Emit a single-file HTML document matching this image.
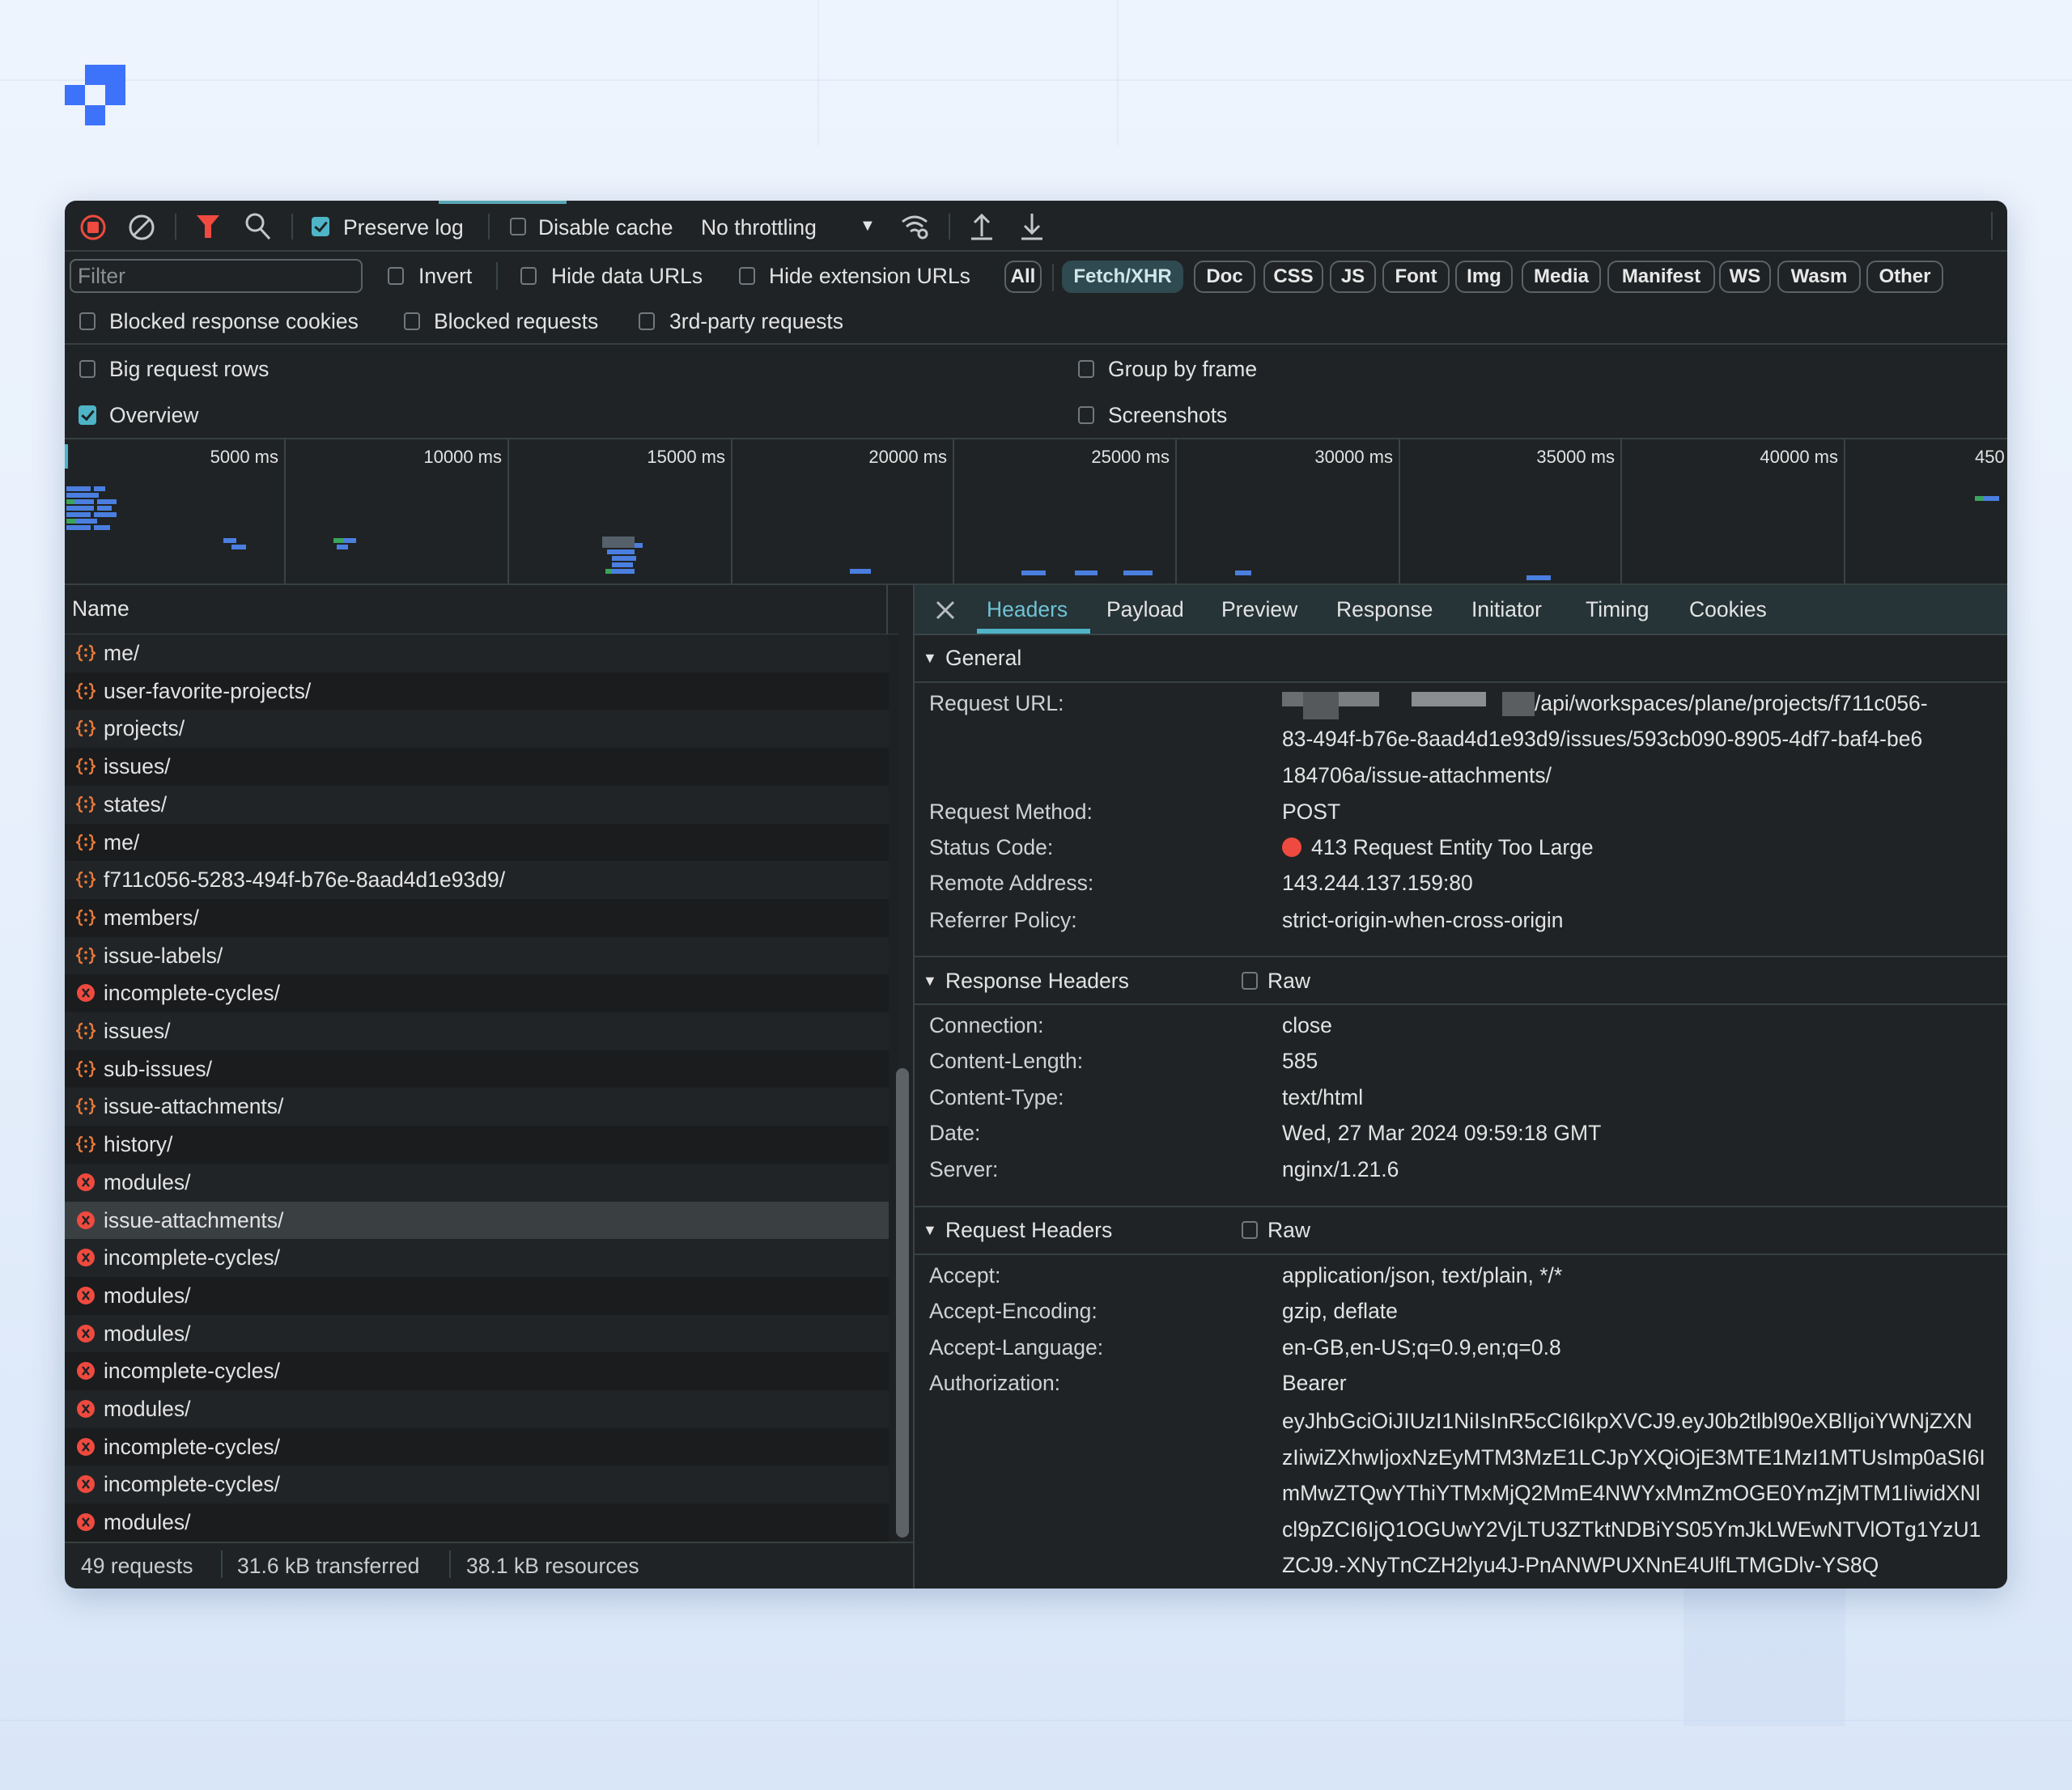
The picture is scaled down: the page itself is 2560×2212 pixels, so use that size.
<!DOCTYPE html>
<html><head><meta charset="utf-8">
<style>
*{margin:0;padding:0;box-sizing:border-box}
html,body{width:2560px;height:2212px;overflow:hidden}
body{background:linear-gradient(180deg,#eef4fd 0%,#e6effb 50%,#d9e6f8 100%);font-family:"Liberation Sans",sans-serif;position:relative}
.gl{position:absolute;background:rgba(170,195,230,.15)}
#p{position:absolute;left:80px;top:248px;width:2400px;height:1715px;background:#1f2325;border-radius:14px;overflow:hidden;box-shadow:0 10px 40px rgba(40,70,120,.25)}
.t{position:absolute;font-size:26.5px;line-height:32px;color:#e3e3e3;white-space:nowrap}
.l{color:#cfd2d4}
.e{color:#f0776b}
.h{position:absolute;left:0;height:2px;background:#37403f}
.v{position:absolute;width:2px;background:#3a4345}
.cb{position:absolute;width:20px;height:22px;border:2px solid #72787c;border-radius:4px}
.cbk{position:absolute;width:22px;height:24px;background:#4fb4c8;border-radius:4px}
.cbk:after{content:"";position:absolute;left:7px;top:3px;width:6px;height:12px;border:solid #1f2325;border-width:0 3px 3px 0;transform:rotate(40deg)}
.chip{position:absolute;top:74px;height:40px;border:2px solid #5b6366;border-radius:12px;font-size:24px;line-height:36px;color:#e8e8e8;text-align:center;font-weight:bold}
.row{position:absolute;left:0;width:1018px;height:47px}
.ic{position:absolute;left:14px;top:11px;width:24px;height:24px}
.rt{position:absolute;left:48px;top:7px;font-size:26.5px;line-height:32px;color:#e3e3e3;white-space:nowrap}
.tl{position:absolute;top:8px;font-size:22px;line-height:28px;color:#e3e3e3;text-align:right;width:150px}
.bar{position:absolute;height:6px;background:#4a7fe0}
.gb{position:absolute;height:6px;background:#3aa55a}
</style></head><body>
<div class="gl" style="left:0;top:98px;width:2560px;height:2px"></div>
<div class="gl" style="left:1010px;top:0;width:2px;height:180px"></div>
<div class="gl" style="left:1380px;top:0;width:2px;height:180px"></div>
<div class="gl" style="left:0;top:2125px;width:2560px;height:2px"></div>
<div class="gl" style="left:2080px;top:1963px;width:200px;height:170px;background:rgba(200,215,240,.35)"></div>
<div style="position:absolute;left:105px;top:80px;width:50px;height:50px;background:#3d72fb"></div>
<div style="position:absolute;left:105px;top:105px;width:25px;height:25px;background:#eef4fd"></div>
<div style="position:absolute;left:80px;top:105px;width:25px;height:25px;background:#3d72fb"></div>
<div style="position:absolute;left:105px;top:130px;width:25px;height:25px;background:#3d72fb"></div>

<div id="p">
<div style="position:absolute;left:462px;top:0;width:158px;height:4px;background:#5aa7b6"></div>
<svg style="position:absolute;left:18px;top:16px" width="34" height="34"><circle cx="17" cy="17" r="14" fill="none" stroke="#ef4a3f" stroke-width="3"/><rect x="10" y="10" width="14" height="14" rx="2" fill="#ef4a3f"/></svg>
<svg style="position:absolute;left:78px;top:16px" width="34" height="34"><circle cx="17" cy="17" r="14" fill="none" stroke="#c4c7c9" stroke-width="3"/><line x1="8" y1="26" x2="26" y2="8" stroke="#c4c7c9" stroke-width="3"/></svg>
<div class="v" style="left:136px;top:16px;height:32px"></div>
<svg style="position:absolute;left:162px;top:16px" width="30" height="32"><path d="M1 2H29L19 14V30H11V14Z" fill="#ef4a3f"/></svg>
<svg style="position:absolute;left:222px;top:14px" width="34" height="36"><circle cx="13" cy="13" r="10" fill="none" stroke="#c4c7c9" stroke-width="3"/><line x1="20" y1="21" x2="31" y2="33" stroke="#c4c7c9" stroke-width="3"/></svg>
<div class="v" style="left:280px;top:16px;height:32px"></div>
<div class="cbk" style="left:305px;top:20px"></div>
<div class="t" style="left:344px;top:17px">Preserve log</div>
<div class="v" style="left:523px;top:16px;height:32px"></div>
<div class="cb" style="left:550px;top:21px"></div>
<div class="t" style="left:585px;top:17px">Disable cache</div>
<div class="t" style="left:786px;top:17px">No throttling</div>
<div class="t" style="left:982px;top:15px;font-size:20px">▼</div>
<svg style="position:absolute;left:1032px;top:14px" width="40" height="36"><path d="M3 12Q18 0 33 12M8 18Q18 9 28 18M13 24Q18 20 23 24" fill="none" stroke="#c4c7c9" stroke-width="3"/><circle cx="28" cy="27" r="5" fill="none" stroke="#c4c7c9" stroke-width="3"/></svg>
<div class="v" style="left:1092px;top:16px;height:32px"></div>
<svg style="position:absolute;left:1118px;top:14px" width="30" height="36"><path d="M15 30V4M6 13L15 4L24 13M2 33H28" fill="none" stroke="#c4c7c9" stroke-width="3"/></svg>
<svg style="position:absolute;left:1180px;top:14px" width="30" height="36"><path d="M15 2V26M6 17L15 26L24 17M2 33H28" fill="none" stroke="#c4c7c9" stroke-width="3"/></svg>
<div class="v" style="left:2380px;top:14px;height:34px"></div>
<div class="h" style="top:61px;width:2400px"></div>
<div style="position:absolute;left:6px;top:72px;width:362px;height:42px;border:2px solid #5b6366;border-radius:8px"></div>
<div class="t" style="left:16px;top:77px;color:#8a8f92">Filter</div>
<div class="cb" style="left:399px;top:82px"></div><div class="t" style="left:437px;top:77px">Invert</div>
<div class="v" style="left:533px;top:76px;height:34px"></div>
<div class="cb" style="left:563px;top:82px"></div><div class="t" style="left:601px;top:77px">Hide data URLs</div>
<div class="cb" style="left:833px;top:82px"></div><div class="t" style="left:870px;top:77px">Hide extension URLs</div>
<div class="chip" style="left:1161px;width:46px">All</div>
<div class="v" style="left:1220px;top:78px;height:34px"></div>
<div class="chip" style="left:1232px;width:150px;background:#2f4a50;border-color:#2f4a50;color:#cfe6ea">Fetch/XHR</div>
<div class="chip" style="left:1395px;width:76px">Doc</div>
<div class="chip" style="left:1481px;width:74px">CSS</div>
<div class="chip" style="left:1563px;width:57px">JS</div>
<div class="chip" style="left:1628px;width:83px">Font</div>
<div class="chip" style="left:1718px;width:71px">Img</div>
<div class="chip" style="left:1800px;width:98px">Media</div>
<div class="chip" style="left:1906px;width:133px">Manifest</div>
<div class="chip" style="left:2044px;width:64px">WS</div>
<div class="chip" style="left:2116px;width:103px">Wasm</div>
<div class="chip" style="left:2226px;width:95px">Other</div>
<div class="cb" style="left:18px;top:138px"></div><div class="t" style="left:55px;top:133px">Blocked response cookies</div>
<div class="cb" style="left:419px;top:138px"></div><div class="t" style="left:456px;top:133px">Blocked requests</div>
<div class="cb" style="left:709px;top:138px"></div><div class="t" style="left:747px;top:133px">3rd-party requests</div>
<div class="h" style="top:176px;width:2400px"></div>
<div class="cb" style="left:18px;top:197px"></div><div class="t" style="left:55px;top:192px">Big request rows</div>
<div class="cb" style="left:1252px;top:197px"></div><div class="t" style="left:1289px;top:192px">Group by frame</div>
<div class="cbk" style="left:17px;top:253px"></div><div class="t" style="left:55px;top:249px">Overview</div>
<div class="cb" style="left:1252px;top:254px"></div><div class="t" style="left:1289px;top:249px">Screenshots</div>
<div class="h" style="top:293px;width:2400px"></div>
<div style="position:absolute;left:0;top:295px;width:2400px;height:178px">
<div style="position:absolute;left:0;top:6px;width:4px;height:30px;background:#4fb4c8"></div>
<div class="v" style="left:271px;top:0;height:178px"></div>
<div class="v" style="left:547px;top:0;height:178px"></div>
<div class="v" style="left:823px;top:0;height:178px"></div>
<div class="v" style="left:1097px;top:0;height:178px"></div>
<div class="v" style="left:1372px;top:0;height:178px"></div>
<div class="v" style="left:1648px;top:0;height:178px"></div>
<div class="v" style="left:1922px;top:0;height:178px"></div>
<div class="v" style="left:2198px;top:0;height:178px"></div>
<div class="tl" style="left:114px">5000 ms</div>
<div class="tl" style="left:390px">10000 ms</div>
<div class="tl" style="left:666px">15000 ms</div>
<div class="tl" style="left:940px">20000 ms</div>
<div class="tl" style="left:1215px">25000 ms</div>
<div class="tl" style="left:1491px">30000 ms</div>
<div class="tl" style="left:1765px">35000 ms</div>
<div class="tl" style="left:2041px">40000 ms</div>
<div class="tl" style="left:2360px;text-align:left">450</div>
<div class="bar" style="left:2px;top:58px;width:30px"></div><div class="bar" style="left:36px;top:58px;width:14px"></div>
<div class="bar" style="left:2px;top:66px;width:40px"></div><div class="bar" style="left:40px;top:74px;width:24px"></div>
<div class="gb" style="left:2px;top:74px;width:10px"></div><div class="bar" style="left:12px;top:74px;width:24px"></div>
<div class="bar" style="left:2px;top:82px;width:34px"></div><div class="bar" style="left:40px;top:82px;width:18px"></div>
<div class="bar" style="left:2px;top:90px;width:30px"></div><div class="bar" style="left:36px;top:90px;width:28px"></div>
<div class="gb" style="left:2px;top:98px;width:12px"></div><div class="bar" style="left:14px;top:98px;width:26px"></div>
<div class="bar" style="left:2px;top:106px;width:30px"></div><div class="bar" style="left:36px;top:106px;width:20px"></div>
<div class="bar" style="left:196px;top:122px;width:16px"></div><div class="bar" style="left:206px;top:130px;width:18px"></div>
<div class="gb" style="left:332px;top:122px;width:12px"></div><div class="bar" style="left:344px;top:122px;width:16px"></div><div class="bar" style="left:336px;top:130px;width:14px"></div>
<div style="position:absolute;left:664px;top:120px;width:40px;height:14px;background:#55606a"></div>
<div class="bar" style="left:704px;top:128px;width:10px"></div>
<div class="bar" style="left:670px;top:136px;width:34px"></div><div class="bar" style="left:676px;top:144px;width:30px"></div>
<div class="bar" style="left:676px;top:152px;width:26px"></div><div class="gb" style="left:668px;top:160px;width:8px"></div><div class="bar" style="left:676px;top:160px;width:28px"></div>
<div class="bar" style="left:970px;top:160px;width:26px"></div>
<div class="bar" style="left:1182px;top:162px;width:30px"></div><div class="bar" style="left:1248px;top:162px;width:28px"></div><div class="bar" style="left:1308px;top:162px;width:36px"></div>
<div class="bar" style="left:1446px;top:162px;width:20px"></div>
<div class="bar" style="left:1806px;top:168px;width:30px"></div>
<div class="gb" style="left:2360px;top:70px;width:10px"></div><div class="bar" style="left:2370px;top:70px;width:20px"></div>
</div>
<div class="h" style="top:473px;width:2400px"></div>
<div style="position:absolute;left:0;top:475px;width:1048px;height:1440px">
<div class="t" style="left:9px;top:13px">Name</div>
<div class="v" style="left:1015px;top:0;height:60px"></div>
<div class="h" style="top:60px;width:1030px"></div>
</div>
<div id="rows" style="position:absolute;left:0;top:536px;width:1030px;height:1121px;background:#1e2123;overflow:hidden">
<div class="row" style="top:0px;background:#212426"><svg class="ic" viewBox="0 0 24 24"><use href="#xi"/></svg><div class="rt">me/</div></div>
<div class="row" style="top:46.7px;background:#1a1c1e"><svg class="ic" viewBox="0 0 24 24"><use href="#xi"/></svg><div class="rt">user-favorite-projects/</div></div>
<div class="row" style="top:93.4px;background:#212426"><svg class="ic" viewBox="0 0 24 24"><use href="#xi"/></svg><div class="rt">projects/</div></div>
<div class="row" style="top:140.1px;background:#1a1c1e"><svg class="ic" viewBox="0 0 24 24"><use href="#xi"/></svg><div class="rt">issues/</div></div>
<div class="row" style="top:186.8px;background:#212426"><svg class="ic" viewBox="0 0 24 24"><use href="#xi"/></svg><div class="rt">states/</div></div>
<div class="row" style="top:233.5px;background:#1a1c1e"><svg class="ic" viewBox="0 0 24 24"><use href="#xi"/></svg><div class="rt">me/</div></div>
<div class="row" style="top:280.2px;background:#212426"><svg class="ic" viewBox="0 0 24 24"><use href="#xi"/></svg><div class="rt">f711c056-5283-494f-b76e-8aad4d1e93d9/</div></div>
<div class="row" style="top:326.9px;background:#1a1c1e"><svg class="ic" viewBox="0 0 24 24"><use href="#xi"/></svg><div class="rt">members/</div></div>
<div class="row" style="top:373.6px;background:#212426"><svg class="ic" viewBox="0 0 24 24"><use href="#xi"/></svg><div class="rt">issue-labels/</div></div>
<div class="row" style="top:420.3px;background:#1a1c1e"><svg class="ic" viewBox="0 0 24 24"><use href="#ei"/></svg><div class="rt e">incomplete-cycles/</div></div>
<div class="row" style="top:467px;background:#212426"><svg class="ic" viewBox="0 0 24 24"><use href="#xi"/></svg><div class="rt">issues/</div></div>
<div class="row" style="top:513.7px;background:#1a1c1e"><svg class="ic" viewBox="0 0 24 24"><use href="#xi"/></svg><div class="rt">sub-issues/</div></div>
<div class="row" style="top:560.4px;background:#212426"><svg class="ic" viewBox="0 0 24 24"><use href="#xi"/></svg><div class="rt">issue-attachments/</div></div>
<div class="row" style="top:607.1px;background:#1a1c1e"><svg class="ic" viewBox="0 0 24 24"><use href="#xi"/></svg><div class="rt">history/</div></div>
<div class="row" style="top:653.8px;background:#212426"><svg class="ic" viewBox="0 0 24 24"><use href="#ei"/></svg><div class="rt e">modules/</div></div>
<div class="row" style="top:700.5px;background:#3a3f42"><svg class="ic" viewBox="0 0 24 24"><use href="#ei"/></svg><div class="rt e">issue-attachments/</div></div>
<div class="row" style="top:747.2px;background:#212426"><svg class="ic" viewBox="0 0 24 24"><use href="#ei"/></svg><div class="rt e">incomplete-cycles/</div></div>
<div class="row" style="top:793.9px;background:#1a1c1e"><svg class="ic" viewBox="0 0 24 24"><use href="#ei"/></svg><div class="rt e">modules/</div></div>
<div class="row" style="top:840.6px;background:#212426"><svg class="ic" viewBox="0 0 24 24"><use href="#ei"/></svg><div class="rt e">modules/</div></div>
<div class="row" style="top:887.3px;background:#1a1c1e"><svg class="ic" viewBox="0 0 24 24"><use href="#ei"/></svg><div class="rt e">incomplete-cycles/</div></div>
<div class="row" style="top:934px;background:#212426"><svg class="ic" viewBox="0 0 24 24"><use href="#ei"/></svg><div class="rt e">modules/</div></div>
<div class="row" style="top:980.7px;background:#1a1c1e"><svg class="ic" viewBox="0 0 24 24"><use href="#ei"/></svg><div class="rt e">incomplete-cycles/</div></div>
<div class="row" style="top:1027.4px;background:#212426"><svg class="ic" viewBox="0 0 24 24"><use href="#ei"/></svg><div class="rt e">incomplete-cycles/</div></div>
<div class="row" style="top:1074.1px;background:#1a1c1e"><svg class="ic" viewBox="0 0 24 24"><use href="#ei"/></svg><div class="rt e">modules/</div></div>
</div>
<div style="position:absolute;left:1027px;top:1072px;width:16px;height:580px;border-radius:8px;background:#5c6266"></div>
<div class="v" style="left:1048px;top:475px;height:1240px;background:#3a4345"></div>
<div class="h" style="top:1657px;width:1048px"></div>
<div class="t" style="left:20px;top:1671px;color:#c9cccf">49 requests</div>
<div class="v" style="left:193px;top:1668px;height:34px"></div>
<div class="t" style="left:213px;top:1671px;color:#c9cccf">31.6 kB transferred</div>
<div class="v" style="left:475px;top:1668px;height:34px"></div>
<div class="t" style="left:496px;top:1671px;color:#c9cccf">38.1 kB resources</div>
<div style="position:absolute;left:1050px;top:475px;width:1350px;height:60px;background:#263337"></div>
<svg style="position:absolute;left:1076px;top:494px" width="24" height="24"><path d="M2 2L22 22M22 2L2 22" stroke="#b8bcbf" stroke-width="3"/></svg>
<div class="t" style="left:1139px;top:489px;color:#6fc3d3">Headers</div>
<div style="position:absolute;left:1127px;top:529px;width:140px;height:6px;background:#4fb4c8"></div>
<div class="t" style="left:1287px;top:489px">Payload</div>
<div class="t" style="left:1429px;top:489px">Preview</div>
<div class="t" style="left:1571px;top:489px">Response</div>
<div class="t" style="left:1738px;top:489px">Initiator</div>
<div class="t" style="left:1879px;top:489px">Timing</div>
<div class="t" style="left:2007px;top:489px">Cookies</div>
<div class="h" style="left:1050px;top:535px;width:1350px;background:#3a4547"></div>
<div class="t" style="left:1060px;top:549px;font-size:18px">▼</div><div class="t" style="left:1088px;top:549px">General</div>
<div class="h" style="left:1050px;top:594px;width:1350px"></div>
<div class="t l" style="left:1068px;top:605px">Request URL:</div>
<div style="position:absolute;left:1504px;top:607px;width:26px;height:18px;background:#6a6e71"></div>
<div style="position:absolute;left:1530px;top:607px;width:44px;height:34px;background:#55595c"></div>
<div style="position:absolute;left:1574px;top:607px;width:50px;height:18px;background:#7a7e81"></div>
<div style="position:absolute;left:1664px;top:607px;width:92px;height:18px;background:#8a8e91"></div>
<div style="position:absolute;left:1776px;top:607px;width:40px;height:30px;background:#5a5e61"></div>
<div class="t" style="left:1816px;top:605px">/api/workspaces/plane/projects/f711c056-</div>
<div class="t" style="left:1504px;top:649px">83-494f-b76e-8aad4d1e93d9/issues/593cb090-8905-4df7-baf4-be6</div>
<div class="t" style="left:1504px;top:694px">184706a/issue-attachments/</div>
<div class="t l" style="left:1068px;top:739px">Request Method:</div><div class="t" style="left:1504px;top:739px">POST</div>
<div class="t l" style="left:1068px;top:783px">Status Code:</div>
<div style="position:absolute;left:1504px;top:787px;width:24px;height:24px;border-radius:50%;background:#ef4a3f"></div>
<div class="t" style="left:1540px;top:783px">413 Request Entity Too Large</div>
<div class="t l" style="left:1068px;top:827px">Remote Address:</div><div class="t" style="left:1504px;top:827px">143.244.137.159:80</div>
<div class="t l" style="left:1068px;top:873px">Referrer Policy:</div><div class="t" style="left:1504px;top:873px">strict-origin-when-cross-origin</div>
<div class="h" style="left:1050px;top:933px;width:1350px"></div>
<div class="t" style="left:1060px;top:948px;font-size:18px">▼</div><div class="t" style="left:1088px;top:948px">Response Headers</div>
<div class="cb" style="left:1454px;top:953px"></div><div class="t" style="left:1486px;top:948px">Raw</div>
<div class="h" style="left:1050px;top:992px;width:1350px"></div>
<div class="t l" style="left:1068px;top:1003px">Connection:</div><div class="t" style="left:1504px;top:1003px">close</div>
<div class="t l" style="left:1068px;top:1047px">Content-Length:</div><div class="t" style="left:1504px;top:1047px">585</div>
<div class="t l" style="left:1068px;top:1092px">Content-Type:</div><div class="t" style="left:1504px;top:1092px">text/html</div>
<div class="t l" style="left:1068px;top:1136px">Date:</div><div class="t" style="left:1504px;top:1136px">Wed, 27 Mar 2024 09:59:18 GMT</div>
<div class="t l" style="left:1068px;top:1181px">Server:</div><div class="t" style="left:1504px;top:1181px">nginx/1.21.6</div>
<div class="h" style="left:1050px;top:1242px;width:1350px"></div>
<div class="t" style="left:1060px;top:1256px;font-size:18px">▼</div><div class="t" style="left:1088px;top:1256px">Request Headers</div>
<div class="cb" style="left:1454px;top:1261px"></div><div class="t" style="left:1486px;top:1256px">Raw</div>
<div class="h" style="left:1050px;top:1301px;width:1350px"></div>
<div class="t l" style="left:1068px;top:1312px">Accept:</div><div class="t" style="left:1504px;top:1312px">application/json, text/plain, */*</div>
<div class="t l" style="left:1068px;top:1356px">Accept-Encoding:</div><div class="t" style="left:1504px;top:1356px">gzip, deflate</div>
<div class="t l" style="left:1068px;top:1401px">Accept-Language:</div><div class="t" style="left:1504px;top:1401px">en-GB,en-US;q=0.9,en;q=0.8</div>
<div class="t l" style="left:1068px;top:1445px">Authorization:</div><div class="t" style="left:1504px;top:1445px">Bearer</div>
<div style="position:absolute;left:1504px;top:1486px;width:896px;height:229px;overflow:hidden">
<div style="font-size:26.5px;color:#e3e3e3;line-height:44.6px;letter-spacing:0;white-space:nowrap">eyJhbGciOiJIUzI1NiIsInR5cCI6IkpXVCJ9.eyJ0b2tlbl90eXBlIjoiYWNjZXN<br>zIiwiZXhwIjoxNzEyMTM3MzE1LCJpYXQiOjE3MTE1MzI1MTUsImp0aSI6I<br>mMwZTQwYThiYTMxMjQ2MmE4NWYxMmZmOGE0YmZjMTM1IiwidXNl<br>cl9pZCI6IjQ1OGUwY2VjLTU3ZTktNDBiYS05YmJkLWEwNTVlOTg1YzU1<br>ZCJ9.-XNyTnCZH2lyu4J-PnANWPUXNnE4UlfLTMGDlv-YS8Q</div>
</div>
</div>
<svg width="0" height="0" style="position:absolute">
<defs>
<g id="xi"><path d="M8 3Q4 3 4 7V10L1 12L4 14V17Q4 21 8 21M16 3Q20 3 20 7V10L23 12L20 14V17Q20 21 16 21" fill="none" stroke="#e6793a" stroke-width="2.4"/><circle cx="12" cy="8" r="1.8" fill="#e6793a"/><circle cx="12" cy="15" r="1.8" fill="#e6793a"/></g>
<g id="ei"><circle cx="12" cy="12" r="11" fill="#ef4a3f"/><path d="M8 7L16 17M16 7L8 17" stroke="#1f2325" stroke-width="2.4"/></g>
</defs></svg>
</body></html>
